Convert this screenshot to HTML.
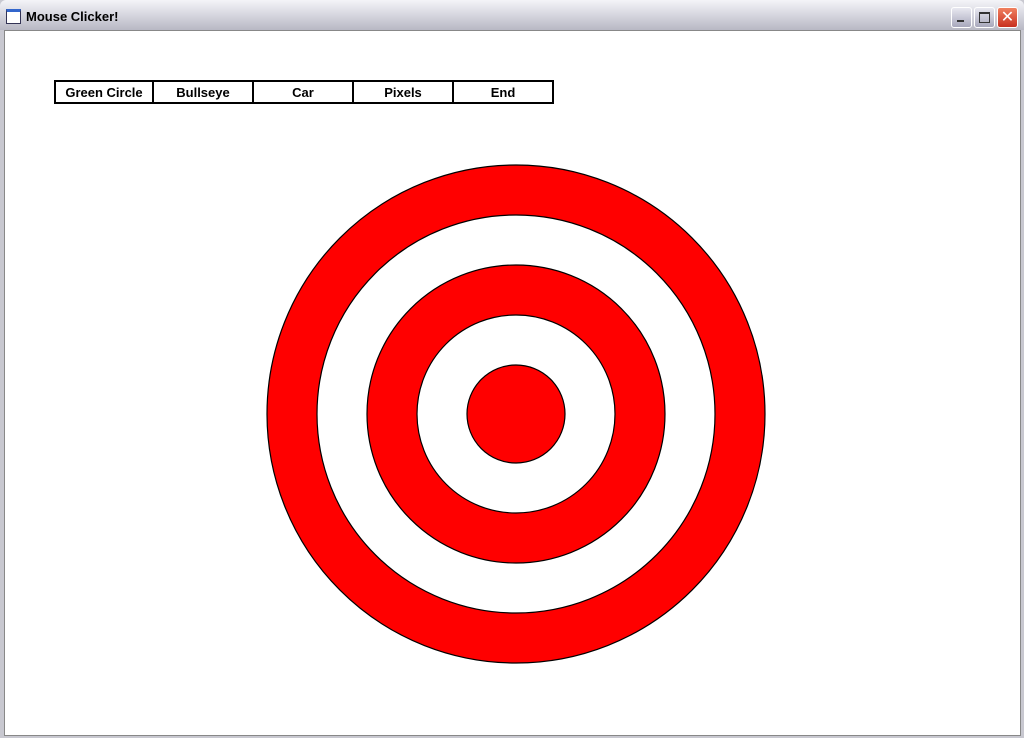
<!DOCTYPE html><html><head><style>
body{margin:0;width:1024px;height:738px;overflow:hidden;background:#c8c8d0;font-family:"Liberation Sans",sans-serif}
.tb{position:absolute;left:0;top:0;width:1024px;height:30px;background:linear-gradient(#f4f4f8,#dcdce4 40%,#b8b8c4);border-radius:6px 6px 0 0}
.ttl{position:absolute;left:26px;top:9px;font-size:13px;font-weight:bold;color:#000}
.ic{position:absolute;left:6px;top:9px;width:13px;height:11px;border:1px solid #335;background:#fff;border-top:3px solid #36c}
.cl{position:absolute;left:4px;top:30px;width:1015px;height:704px;background:#fff;border:1px solid #888}
.b{position:absolute;top:7px;width:19px;height:19px;border:1px solid #fff;border-radius:3px;background:linear-gradient(#e8e8f0,#a8a8bc)}
.x{background:linear-gradient(#f08060,#c83020);color:#fff;font-size:16px;text-align:center;line-height:19px}
.btns{position:absolute;left:54px;top:80px;display:flex}
.btns div{width:96px;height:20px;border:2px solid #000;margin-right:0;font-size:13px;font-weight:bold;text-align:center;line-height:22px;background:#fff}
.btns div+div{margin-left:-2px;width:98px}
</style></head><body>
<div class="tb"><div class="ic"></div><div class="ttl">Mouse Clicker!</div>
<div class="b" style="left:951px"><div style="position:absolute;left:5px;top:12px;width:7px;height:2px;background:#333"></div></div>
<div class="b" style="left:974px"><div style="position:absolute;left:4px;top:4px;width:9px;height:8px;border:1px solid #333;border-top:2px solid #333"></div></div>
<div class="b x" style="left:997px">✕</div></div>
<div class="cl"></div>
<div class="btns"><div>Green Circle</div><div>Bullseye</div><div>Car</div><div>Pixels</div><div>End</div></div>
<svg style="position:absolute;left:0;top:0" width="1024" height="738">
<g stroke="#000" stroke-width="1.2">
<circle cx="516" cy="414" r="249" fill="#f00"/>
<circle cx="516" cy="414" r="199" fill="#fff"/>
<circle cx="516" cy="414" r="149" fill="#f00"/>
<circle cx="516" cy="414" r="99" fill="#fff"/>
<circle cx="516" cy="414" r="49" fill="#f00"/>
</g></svg>
</body></html>
